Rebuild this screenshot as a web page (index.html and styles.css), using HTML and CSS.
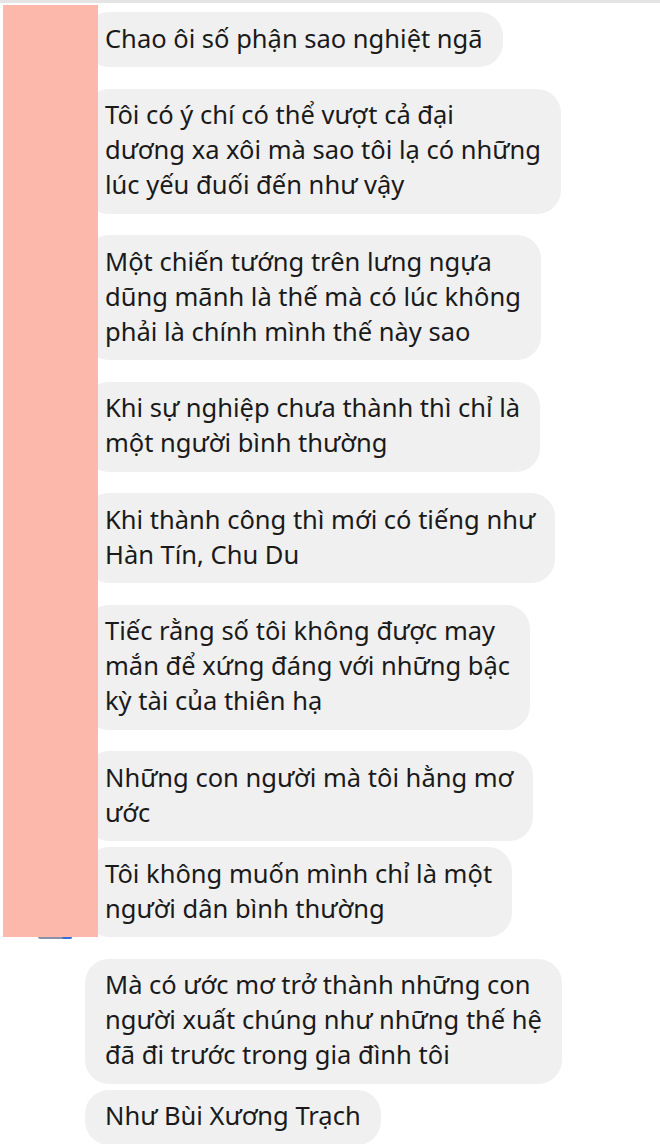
FILE: index.html
```html
<!DOCTYPE html>
<html lang="vi">
<head>
    <meta charset="UTF-8">
    <meta name="viewport" content="width=device-width, initial-scale=1.0">
    <title>Tin nhắn</title>
    <link rel="stylesheet" href="styles.css">
</head>
<body>
    <div class="topline"></div>
    <div class="chat">
        <div class="cover"></div>
        <div class="seen"><span class="dot"></span></div>

        <div class="group">
            <div class="bubble">Chao ôi số phận sao nghiệt ngã</div>
        </div>
        <div class="group">
            <div class="bubble">Tôi có ý chí có thể vượt cả đại<br>dương xa xôi mà sao tôi lạ có những<br>lúc yếu đuối đến như vậy</div>
        </div>
        <div class="group">
            <div class="bubble">Một chiến tướng trên lưng ngựa<br>dũng mãnh là thế mà có lúc không<br>phải là chính mình thế này sao</div>
        </div>
        <div class="group">
            <div class="bubble">Khi sự nghiệp chưa thành thì chỉ là<br>một người bình thường</div>
        </div>
        <div class="group">
            <div class="bubble">Khi thành công thì mới có tiếng như<br>Hàn Tín, Chu Du</div>
        </div>
        <div class="group">
            <div class="bubble">Tiếc rằng số tôi không được may<br>mắn để xứng đáng với những bậc<br>kỳ tài của thiên hạ</div>
        </div>
        <div class="group">
            <div class="bubble">Những con người mà tôi hằng mơ<br>ước</div>
            <div class="bubble">Tôi không muốn mình chỉ là một<br>người dân bình thường</div>
        </div>
        <div class="group">
            <div class="bubble">Mà có ước mơ trở thành những con<br>người xuất chúng như những thế hệ<br>đã đi trước trong gia đình tôi</div>
            <div class="bubble">Như Bùi Xương Trạch</div>
        </div>
    </div>
</body>
</html>
```

FILE: styles.css
```css
body {
    margin: 0;
    padding: 0;
    background: #fff;
    font-family: "Noto Sans", "Open Sans", sans-serif;
    color: #1a1a1a;
    overflow: hidden;
}

.topline {
    height: 3px;
    background: #e4e4e4;
}

.chat {
    position: relative;
    padding: 9px 0 0 85px;
}

.cover {
    position: absolute;
    left: 3px;
    top: 2px;
    width: 95px;
    height: 932px;
    background: #fbb8ab;
    z-index: 2;
}

.seen {
    position: absolute;
    left: 38px;
    top: 932px;
    width: 34px;
    height: 4px;
    border-radius: 2px;
    background: #8a93a6;
    z-index: 1;
}

.seen .dot {
    position: absolute;
    right: 0;
    top: 0;
    width: 10px;
    height: 4px;
    border-radius: 2px;
    background: #2f6fe0;
}

.group {
    display: flex;
    flex-direction: column;
    align-items: flex-start;
    gap: 6px;
    margin-bottom: 21.5px;
}

.bubble {
    background: #f0f0f0;
    border-radius: 24px;
    padding: 8.5px 20px 11.5px 20px;
    font-size: 25.5px;
    line-height: 35px;
    white-space: nowrap;
}
```
